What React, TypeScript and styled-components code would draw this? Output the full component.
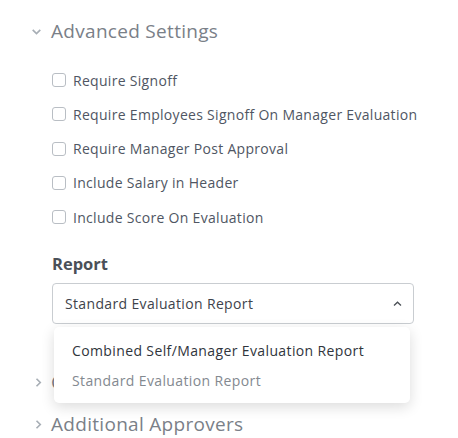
import styled, { createGlobalStyle } from 'styled-components';

const GlobalStyle = createGlobalStyle`
  body {
    margin: 0;
    background: #fff;
    font-family: 'Open Sans', 'Liberation Sans', sans-serif;
  }
`;

const Page = styled.div`
  width: 458px;
  height: 438px;
  overflow: hidden;
  padding: 16px 0 0 30px;
  box-sizing: border-box;
`;

const SectionHeader = styled.div`
  display: flex;
  align-items: center;
  gap: 8px;
  height: 30px;
  color: #7a8088;
  font-size: 19px;
  letter-spacing: 0.3px;
  > svg {
    flex: none;
  }
`;

const SectionBody = styled.div`
  padding: 0 0 0 22px;
`;

const CheckList = styled.div`
  display: flex;
  flex-direction: column;
  gap: 14.3px;
  margin-top: 24px;
`;

const CheckRow = styled.label`
  display: flex;
  align-items: center;
  gap: 7px;
  height: 20px;
  color: #4f5663;
  font-size: 14px;
  letter-spacing: 0.3px;
`;

const Box = styled.span`
  width: 12px;
  height: 12px;
  border: 1px solid #b9bec4;
  border-radius: 3px;
  background: #fff;
`;

const FieldLabel = styled.div`
  margin-top: 26px;
  height: 22px;
  line-height: 22px;
  font-size: 16.5px;
  font-weight: 700;
  color: #4a5058;
`;

const SelectWrap = styled.div`
  position: relative;
  width: 362px;
  margin-top: 8px;
`;

const SelectBox = styled.div`
  height: 41px;
  box-sizing: border-box;
  border: 1px solid #c9cdd1;
  border-radius: 4px;
  display: flex;
  align-items: center;
  justify-content: space-between;
  padding: 0 10px 0 12px;
  font-size: 14px;
  letter-spacing: 0.35px;
  color: #3e434b;
`;

const Menu = styled.div`
  position: absolute;
  top: 44px;
  left: 2px;
  width: 356px;
  background: #fff;
  border-radius: 5px;
  box-shadow: 0 4px 14px rgba(0, 0, 0, 0.14);
  padding: 9px 0 7px;
  z-index: 2;
`;

const MenuItem = styled.div<{ $muted?: boolean }>`
  height: 30px;
  line-height: 30px;
  padding: 0 18px;
  font-size: 14px;
  letter-spacing: 0.38px;
  color: ${p => (p.$muted ? '#838990' : '#30353c')};
`;

const Collapsed = styled(SectionHeader)<{ $gap?: number }>`
  margin-top: ${p => p.$gap ?? 12}px;
`;

const ChevronDown = () => (
  <svg width="13" height="13" viewBox="0 0 12 12">
    <path d="M2.5 4.5 L6 8 L9.5 4.5" fill="none" stroke="#a7aeb5" strokeWidth="1.5" />
  </svg>
);

const ChevronRight = () => (
  <svg width="13" height="13" viewBox="0 0 12 12">
    <path d="M6 2.5 L9.5 6 L6 9.5" fill="none" stroke="#a7aeb5" strokeWidth="1.5" />
  </svg>
);

const ChevronUp = () => (
  <svg width="11" height="10" viewBox="0 0 11 10">
    <path d="M2 6.5 L5.5 3.2 L9 6.5" fill="none" stroke="#4a4f56" strokeWidth="1.3" />
  </svg>
);

const options = [
  'Require Signoff',
  'Require Employees Signoff On Manager Evaluation',
  'Require Manager Post Approval',
  'Include Salary in Header',
  'Include Score On Evaluation',
];

const App = () => {
  return (
    <Page>
      <GlobalStyle />
      <SectionHeader>
        <ChevronDown />
        Advanced Settings
      </SectionHeader>
      <SectionBody>
        <CheckList>
          {options.map(o => (
            <CheckRow key={o}>
              <Box />
              {o}
            </CheckRow>
          ))}
        </CheckList>
        <FieldLabel>Report</FieldLabel>
        <SelectWrap>
          <SelectBox>
            Standard Evaluation Report
            <ChevronUp />
          </SelectBox>
          <Menu>
            <MenuItem>Combined Self/Manager Evaluation Report</MenuItem>
            <MenuItem $muted>Standard Evaluation Report</MenuItem>
          </Menu>
        </SelectWrap>
      </SectionBody>
      <Collapsed $gap={43}>
        <ChevronRight />
        Competencies
      </Collapsed>
      <Collapsed>
        <ChevronRight />
        Additional Approvers
      </Collapsed>
    </Page>
  );
};

export default App;
